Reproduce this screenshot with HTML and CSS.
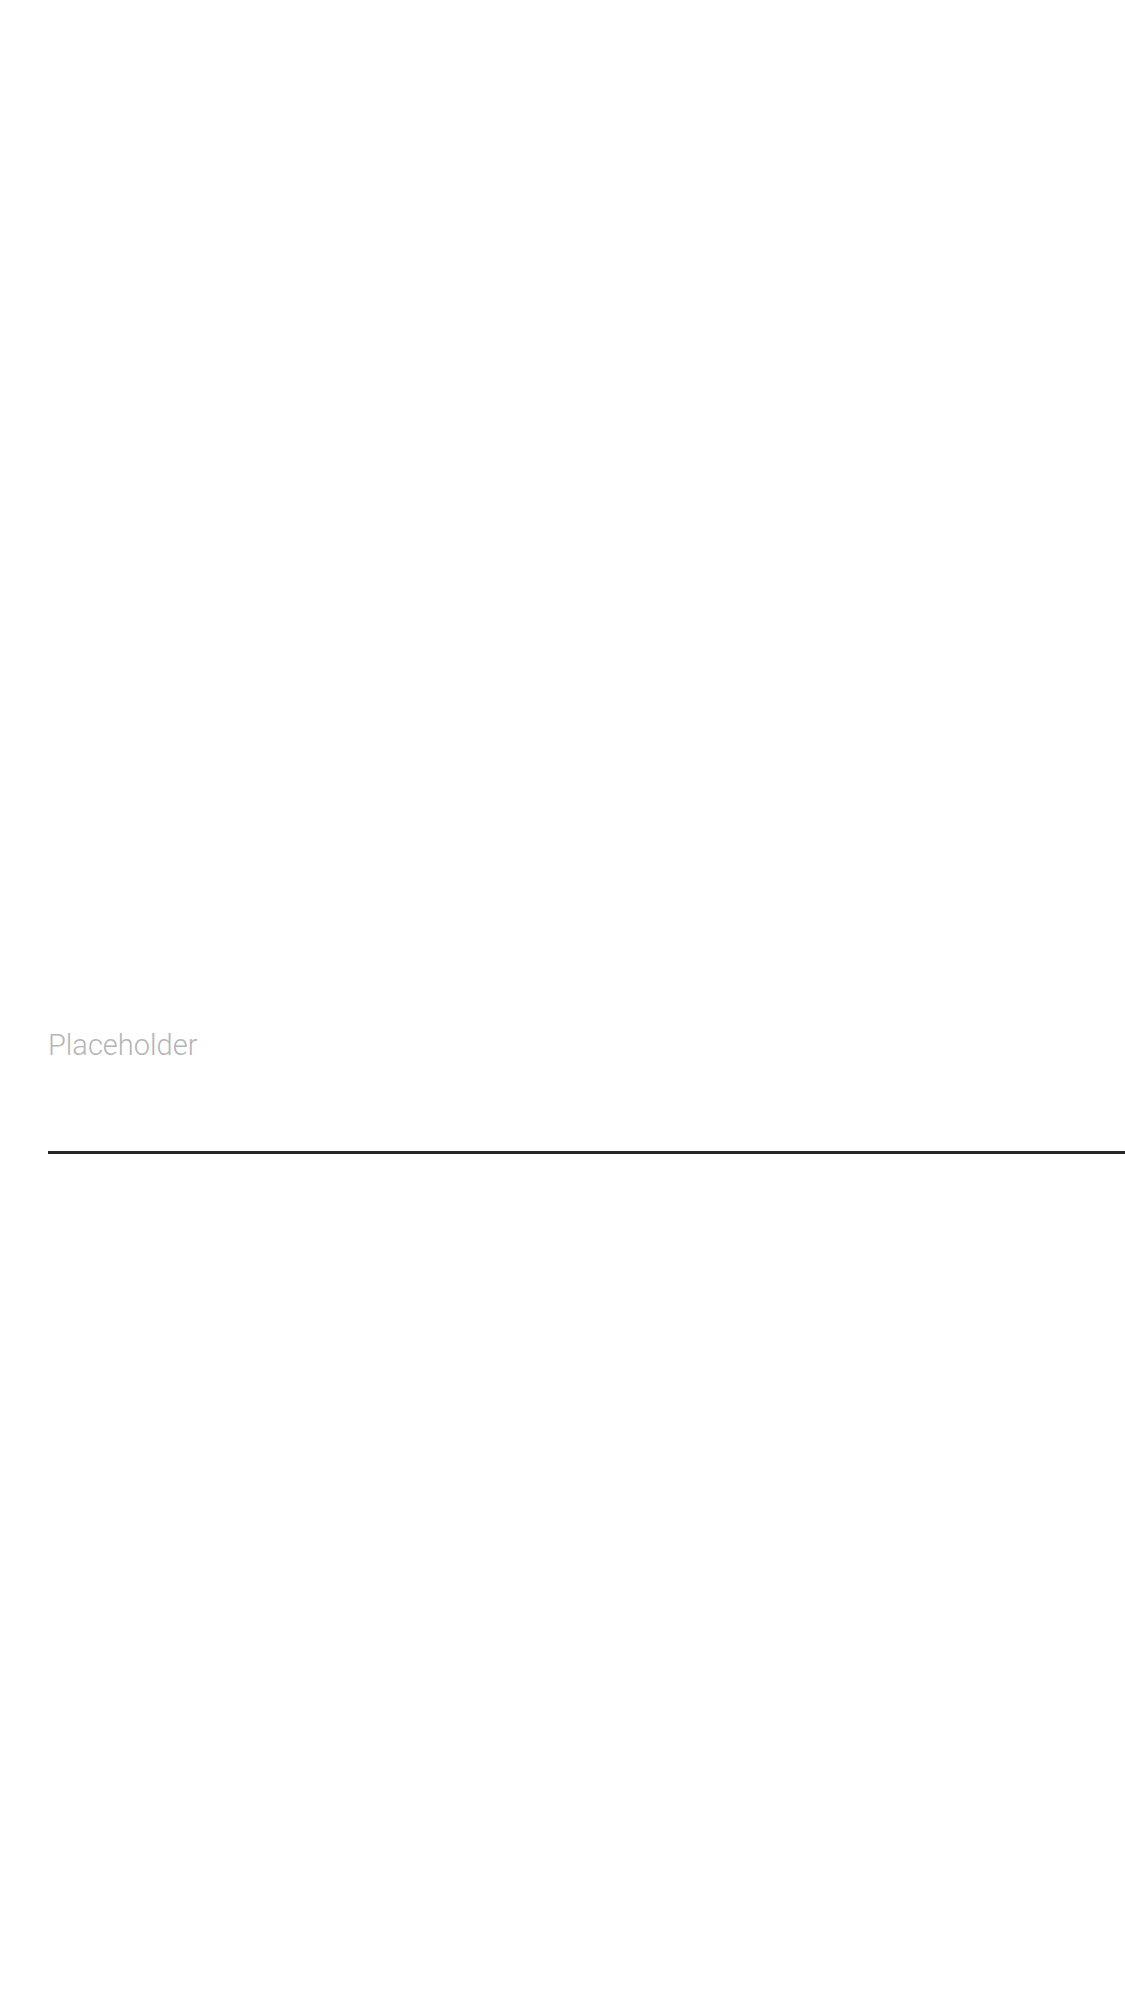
FILE: index.html
```html
<!DOCTYPE html>
<html lang="en">
<head>
<meta charset="utf-8">
<title>Placeholder</title>
<link rel="stylesheet" href="styles.css">
</head>
<body>
<main class="page">
  <div class="field">
    <div class="field-placeholder">Placeholder</div>
    <div class="field-line"></div>
  </div>
</main>
</body>
</html>
```
FILE: styles.css
```css
html, body {
  margin: 0;
  padding: 0;
  background: #ffffff;
}
.page {
  min-height: 2001px;
  box-sizing: border-box;
  padding-top: 1027px;
}
.field {
  padding-left: 48px;
}
.field-placeholder {
  font-family: "Roboto", "Liberation Sans", sans-serif;
  font-weight: 300;
  font-size: 29px;
  line-height: 36px;
  height: 36px;
  color: #b5b5b5;
}
.field-line {
  margin-top: 88px;
  height: 3px;
  background: #262626;
}
```
